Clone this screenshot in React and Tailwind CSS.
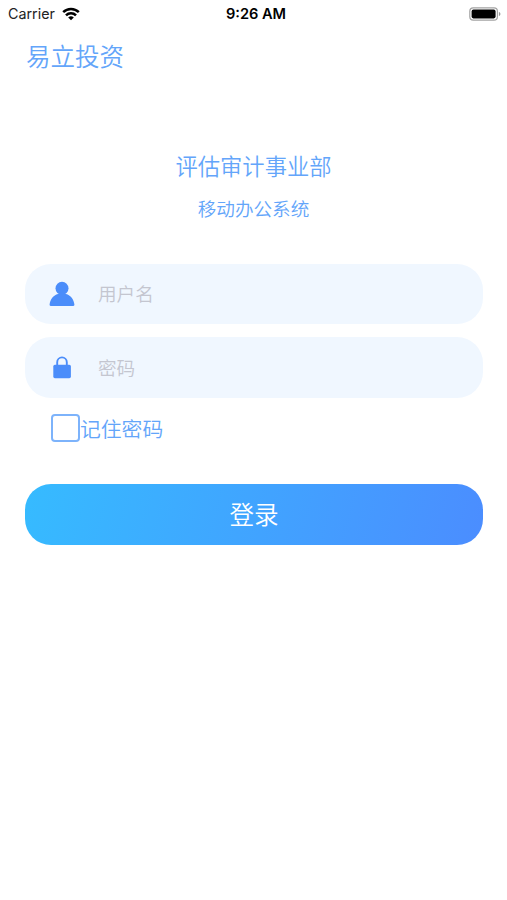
import { useState } from "react";

function WifiIcon() {
  return (
    <svg width="18" height="14" viewBox="0 0 18 14" fill="none" stroke="#000" strokeWidth="2.5">
      <path d="M1.2 5.200a11 11 0 0 1 15.600 0" />
      <path d="M4 8.400a7 7 0 0 1 10 0" />
      <path d="M9 13.200 6.200 10.600a4 4 0 0 1 5.600 0z" fill="#000" stroke="none" />
    </svg>
  );
}

function BatteryIcon() {
  return (
    <svg width="32" height="14" viewBox="0 0 32 14">
      <rect x="0.8" y="0.8" width="27.6" height="12.4" rx="3.4" fill="#fff" stroke="#a3a3a3" strokeWidth="1.2" />
      <rect x="2.6" y="2.6" width="24" height="8.8" rx="1.8" fill="#000" />
      <path d="M29.900 5v4c1-.3 1.500-1.100 1.500-2s-.5-1.700-1.500-2z" fill="#999" />
    </svg>
  );
}

function UserIcon() {
  return (
    <svg width="26" height="26" viewBox="0 0 26 26" fill="#4b8dfa">
      <circle cx="13" cy="7.300" r="6.500" />
      <path d="M9 13h8c4.600 1.300 7.900 5.400 8.400 10.600.1.900-.3 1.400-1.100 1.400H1.700c-.8 0-1.200-.5-1.100-1.400C1.100 18.400 4.400 14.300 9 13z" />
    </svg>
  );
}

function LockIcon() {
  return (
    <svg width="26" height="26" viewBox="0 0 26 26">
      <path d="M8.200 11V7.200a4.800 4.800 0 0 1 9.600 0V11" fill="none" stroke="#4b8dfa" strokeWidth="1.900" />
      <rect x="4.300" y="9.800" width="17.600" height="13.400" rx="1.600" fill="#4b8dfa" />
    </svg>
  );
}

export default function App() {
  const [username, setUsername] = useState("");
  const [password, setPassword] = useState("");
  const [remember, setRemember] = useState(false);

  return (
    <div className="h-[900px] w-full overflow-hidden bg-white font-['Noto_Sans_CJK_SC',sans-serif] font-[350] text-[#63a5fa]">
      <div className="grid h-7 grid-cols-3 items-center pl-2 pr-[6px] font-['Inter',sans-serif] text-black">
        <div className="flex items-center gap-[7px]">
          <span className="text-[14.300px] font-normal leading-none text-[#222]">Carrier</span>
          <WifiIcon />
        </div>
        <span className="pl-[3px] text-center text-[14.600px] font-semibold leading-none">9:26 AM</span>
        <div className="flex justify-end">
          <BatteryIcon />
        </div>
      </div>

      <h1 className="mt-2 pl-[26px] text-[24.500px] font-[350] leading-[40px]">易立投资</h1>

      <div className="mt-[73px] text-center">
        <h2 className="text-[22.300px] font-[350] leading-8">评估审计事业部</h2>
        <p className="mt-[13px] text-[18.600px] leading-7">移动办公系统</p>
      </div>

      <form onSubmit={(e) => e.preventDefault()} className="mt-[42px] pl-[25px] pr-6">
        <div className="flex h-[60px] items-center rounded-[26px] bg-[#f0f7ff] pl-6">
          <UserIcon />
          <input
            type="text"
            placeholder="用户名"
            className="mb-[2px] ml-[23px] w-[340px] text-[18.600px] outline-none placeholder:text-[#c4c6d0]"
            value={username}
            onChange={(e) => setUsername(e.target.value)}
          />
        </div>

        <div className="mt-[13px] flex h-[61px] items-center rounded-[26px] bg-[#f0f7ff] pl-6">
          <LockIcon />
          <input
            type="password"
            placeholder="密码"
            className="mb-[2px] ml-[23px] w-[340px] text-[18.600px] outline-none placeholder:text-[#c4c6d0]"
            value={password}
            onChange={(e) => setPassword(e.target.value)}
          />
        </div>

        <label className="mt-4 flex h-7 items-center pl-[26px]">
          <input
            type="checkbox"
            className="h-7 w-[29px] appearance-none rounded-[4px] border-2 border-[#7db3fb] checked:bg-[#63a5fa]"
            checked={remember}
            onChange={(e) => setRemember(e.target.checked)}
          />
          <span className="text-[20.800px] leading-7">记住密码</span>
        </label>

        <button
          type="submit"
          className="mt-[42px] h-[61px] w-full rounded-[26px] bg-[linear-gradient(105deg,#36bbff_0%,#4b8dff_100%)] pb-[2px] text-[24.600px] text-white"
        >
          登录
        </button>
      </form>
    </div>
  );
}
